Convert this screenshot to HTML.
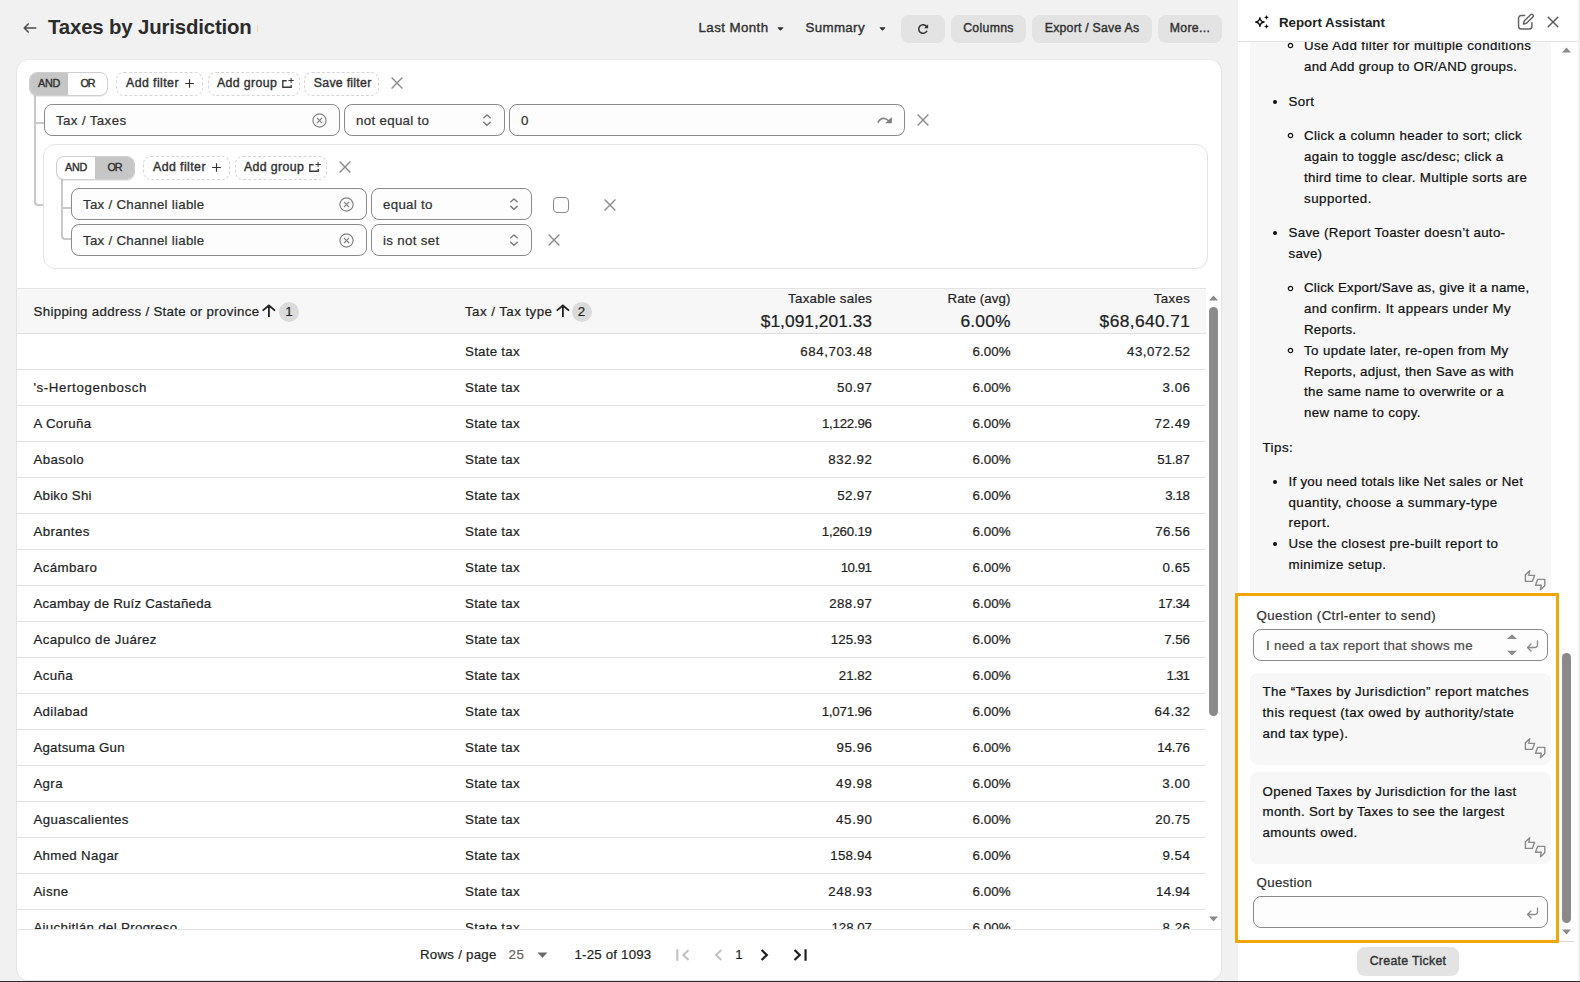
<!DOCTYPE html><html lang="en"><head><meta charset="utf-8"><title>Taxes by Jurisdiction</title>
<style>
*{box-sizing:border-box;margin:0;padding:0}
html,body{width:1580px;height:982px;overflow:hidden}
body{background:#f1f1f1;font-family:"Liberation Sans",sans-serif;font-size:13.3px;line-height:20px;color:#1f1f1f;position:relative}
.a{position:absolute}
span{white-space:nowrap}
svg{display:block;overflow:visible}
body{-webkit-text-stroke:.22px currentColor}
.m{-webkit-text-stroke:.38px currentColor}
/* header */
#title{left:48px;top:13px;font-size:20.4px;line-height:28px;font-weight:700;color:#2b2b2b;-webkit-text-stroke:0}
.hl{font-size:13.3px;line-height:20px;color:#303030;top:17.5px}
.btn{top:15px;height:28px;background:#e3e3e3;border-radius:8px;font-size:12.3px;line-height:26.6px;color:#303030;text-align:center}
/* card */
#card{left:16px;top:59px;width:1206px;height:922px;background:#fff;border:1px solid #e4e4e4;border-top-color:#ebebeb;border-radius:13px;overflow:hidden}
#ci{position:absolute;left:1px;top:1px;width:1204px;height:920px}
#ci>*{position:absolute}
.tog{height:24px;border:1px solid #cfcfcf;border-radius:8px;background:#fff;overflow:hidden;font-size:10.8px;line-height:21.4px;color:#303030;box-shadow:0 1px 0 rgba(0,0,0,.08)}
.tog b{position:absolute;top:0;height:22px;font-weight:400;text-align:center}
.tog b.on{background:#c6c6c6}
.dash{height:24px;border:1px dashed #d6d6d6;border-radius:8px;font-size:12.3px;line-height:22px;color:#303030;background:#fff}
.dash span{position:absolute;top:-1.100px}
.inp{height:32px;border:1px solid #8a8a8a;border-radius:8px;background:#fdfdfd;font-size:13.3px;line-height:30px;color:#303030}
.inp span{position:absolute;left:11px;top:.6px}
.inp svg{position:absolute}
.ln2{background:#c9c9c9}
.tl{border-left:2px solid #c9c9c9;border-bottom:2px solid #c9c9c9;border-bottom-left-radius:4px}
/* table */
#thead{left:-1px;top:227px;width:1189px;height:46px;background:#f7f7f7;border-top:1px solid #e3e3e3;border-bottom:1px solid #e0e0e0}
#thead>*{position:absolute}
.th{font-size:13.3px;line-height:20px;color:#1f1f1f}
.tot{font-size:17.4px;line-height:24px;color:#202223}
.badge{width:20px;height:20px;border-radius:10px;background:#dbdbdb;text-align:center;font-size:13.3px;line-height:20px}
#tbody{left:-1px;top:273px;width:1189px;height:596px;overflow:hidden}
.tr{position:relative;height:36px;border-bottom:1px solid #e3e3e3;line-height:35px}
.tr>div{position:absolute;top:0;height:35px}
.c1{left:16.400px}.c2{left:448px}
.c3{right:334px}.c4{right:195.5px}.c5{right:16px}
#tfoot{left:0;top:868px;width:1203px;height:52px;border-top:1px solid #e3e3e3;background:#fff}
#tfoot>*{position:absolute}
/* panel */
#panel{left:1238px;top:0;width:340px;height:981px;background:#fff;overflow:hidden}
#panel>*{position:absolute}
.bub{background:#f7f7f7;border-radius:8px}
.ln{position:absolute;line-height:20px;height:20px;font-size:13.3px;color:#0f0f0f}
.disc{position:absolute;width:4.2px;height:4.2px;border-radius:50%;background:#0f0f0f}
.circ{position:absolute;width:5.4px;height:5.4px;border-radius:50%;border:1.1px solid #303030}
</style></head>
<body>
<!-- top bar -->
<svg class="a" style="left:20px;top:18px" width="20" height="20" viewBox="0 0 20 20"><path fill="#4a4a4a" d="M16.5 10a.75.75 0 0 1-.75.75h-9.69l2.72 2.72a.75.75 0 0 1-1.06 1.06l-4-4a.75.75 0 0 1 0-1.06l4-4a.75.75 0 1 1 1.06 1.06l-2.72 2.72h9.69a.75.75 0 0 1 .75.75Z"></path></svg>
<div id="title" class="a"><span style="letter-spacing: -0.16px;">Taxes by Jurisdiction</span></div>
<i class="a" style="left:257px;top:24.500px;width:1px;height:7px;background:#f5d9ae"></i>
<div class="a hl m" style="left:698.5px"><span style="letter-spacing: 0.42px;">Last Month</span></div>
<svg class="a" style="left:776.600px;top:25.500px" width="7" height="5.250" viewBox="0 0 8 6"><path fill="#303030" d="M1.3 1.4h5.4c.5 0 .7.5.4.9L4.5 5c-.3.3-.7.3-1 0L.9 2.3c-.3-.4-.1-.9.4-.9Z"></path></svg>
<div class="a hl m" style="left:805.5px"><span style="letter-spacing: 0.36px;">Summary</span></div>
<svg class="a" style="left:878.500px;top:25.500px" width="7" height="5.250" viewBox="0 0 8 6"><path fill="#303030" d="M1.3 1.4h5.4c.5 0 .7.5.4.9L4.5 5c-.3.3-.7.3-1 0L.9 2.3c-.3-.4-.1-.9.4-.9Z"></path></svg>
<div class="a btn" style="left:901px;width:44px"><svg style="position:absolute;left:16px;top:7.700px" width="12" height="12" viewBox="0 0 12 12"><path fill="none" stroke="#303030" stroke-width="1.500" d="M9.500 3.500A4.300 4.300 0 1 0 10 7.700"></path><path fill="#303030" d="M11.100 1.200v4H7.100z"></path></svg></div>
<div class="a btn m" style="left:951px;width:75px"><span style="letter-spacing: 0.3px;">Columns</span></div>
<div class="a btn m" style="left:1032px;width:120px"><span style="letter-spacing: 0.23px;">Export / Save As</span></div>
<div class="a btn m" style="left:1158px;width:64px"><span style="letter-spacing: 0.33px;">More...</span></div>

<!-- main card -->
<div id="card" class="a"><div id="ci">
  <!-- tree lines level 1 -->
  <i class="tl" style="left:16.200px;top:34px;width:9.300px;height:110.600px"></i>
  <i class="ln2" style="left:18px;top:61.200px;width:8px;height:2px"></i>
  <!-- level 1 toolbar -->
  <div class="tog m" style="left:11px;top:11px;width:79px"><b class="on" style="left:0;width:38px"><span style="letter-spacing: -0.27px;">AND</span></b><b style="left:38px;width:39px"><span style="letter-spacing: -1.1px;">OR</span></b></div>
  <div class="dash m" style="left:98px;top:11px;width:87px"><span style="left: 9px; letter-spacing: 0.44px;">Add filter</span><svg style="position:absolute;left:68.3px;top:6.1px" width="9" height="9" viewBox="0 0 9 9"><path stroke="#303030" stroke-width="1.15" d="M4.500.15v8.700M.15 4.500h8.700"></path></svg></div>
  <div class="dash m" style="left:189.5px;top:11px;width:92.5px"><span style="left: 8.5px; letter-spacing: 0.38px;">Add group</span><svg style="position:absolute;left:72.5px;top:4px" width="13" height="11" viewBox="0 0 13 11"><path fill="none" stroke="#3a3a3a" stroke-width="1.400" d="M5.700 3.800H1.800v6.400h8.400V8.100"></path><path stroke="#3a3a3a" stroke-width="1.100" d="M10.100 1.050v4.900M7.400 3.500h5.400"></path></svg></div>
  <div class="dash m" style="left:285.8px;top:11px;width:75px"><span style="left: 9px; letter-spacing: 0.28px;">Save filter</span></div>
  <svg style="left:372.7px;top:16.4px" width="12" height="12" viewBox="0 0 12 12"><path stroke="#8a8a8a" stroke-width="1.350" d="M.6.6l10.8 10.8M11.4.6L.6 11.4"></path></svg>
  <!-- row 1 -->
  <div class="inp" style="left:26px;top:43px;width:296px"><span style="letter-spacing: 0.38px;">Tax / Taxes</span><svg style="left:266.9px;top:8.1px" width="15" height="15" viewBox="0 0 15 15"><circle cx="7.5" cy="7.5" r="6.6" fill="none" stroke="#808080" stroke-width="1.15"></circle><path stroke="#808080" stroke-width="1.25" d="M4.9 4.9l5.2 5.2M10.1 4.9L4.9 10.1"></path></svg></div>
  <div class="inp" style="left:326px;top:43px;width:161px"><span style="letter-spacing: 0.32px;">not equal to</span><svg style="left:137px;top:7px" width="10" height="16" viewBox="0 0 10 16"><path fill="none" stroke="#808080" stroke-width="1.45" d="M1.3 6.300L5 2.900l3.700 3.400M1.300 9.900L5 13.300l3.700-3.400"></path></svg></div>
  <div class="inp" style="left:491px;top:43px;width:396px"><span style="letter-spacing: 1px;">0</span><svg style="left:367px;top:10px" width="16" height="12" viewBox="0 0 16 12"><path fill="none" stroke="#808080" stroke-width="1.500" d="M.9 7.900C2.300 4.600 5 3 7.600 3.500c1.500.300 2.900 1.100 4.100 2.300"></path><path fill="#808080" d="M14.800 2.100v6.200H8.200z"></path></svg></div>
  <svg style="left:899px;top:53.4px" width="12" height="12" viewBox="0 0 12 12"><path stroke="#8a8a8a" stroke-width="1.350" d="M.6.6l10.8 10.8M11.4.6L.6 11.4"></path></svg>
  <!-- nested group -->
  <div style="left:25px;top:82.5px;width:1165px;height:125.500px;border:1px solid #e3e3e3;border-radius:12px"></div>
  <i class="tl" style="left:43.200px;top:118px;width:9.800px;height:60.700px"></i>
  <i class="ln2" style="left:45px;top:145.900px;width:8px;height:2px"></i>
  <div class="tog m" style="left:38px;top:95px;width:79px"><b style="left:0;width:38px"><span style="letter-spacing: -0.27px;">AND</span></b><b class="on" style="left:38px;width:39px"><span style="letter-spacing: -1.1px;">OR</span></b></div>
  <div class="dash m" style="left:125px;top:95px;width:87px"><span style="left: 9px; letter-spacing: 0.44px;">Add filter</span><svg style="position:absolute;left:68.3px;top:6.1px" width="9" height="9" viewBox="0 0 9 9"><path stroke="#303030" stroke-width="1.15" d="M4.500.15v8.700M.15 4.500h8.700"></path></svg></div>
  <div class="dash m" style="left:216.500px;top:95px;width:92.5px"><span style="left: 8.5px; letter-spacing: 0.38px;">Add group</span><svg style="position:absolute;left:72.5px;top:4px" width="13" height="11" viewBox="0 0 13 11"><path fill="none" stroke="#3a3a3a" stroke-width="1.400" d="M5.700 3.800H1.800v6.400h8.400V8.100"></path><path stroke="#3a3a3a" stroke-width="1.100" d="M10.100 1.050v4.900M7.400 3.500h5.400"></path></svg></div>
  <svg style="left:321.2px;top:100.3px" width="12" height="12" viewBox="0 0 12 12"><path stroke="#8a8a8a" stroke-width="1.350" d="M.6.6l10.8 10.8M11.4.6L.6 11.4"></path></svg>
  <div class="inp" style="left:53px;top:127px;width:296px"><span style="letter-spacing: 0.27px;">Tax / Channel liable</span><svg style="left:266.9px;top:8.1px" width="15" height="15" viewBox="0 0 15 15"><circle cx="7.5" cy="7.5" r="6.6" fill="none" stroke="#808080" stroke-width="1.15"></circle><path stroke="#808080" stroke-width="1.25" d="M4.9 4.9l5.2 5.2M10.1 4.9L4.9 10.1"></path></svg></div>
  <div class="inp" style="left:353px;top:127px;width:161px"><span style="letter-spacing: 0.3px;">equal to</span><svg style="left:137px;top:7px" width="10" height="16" viewBox="0 0 10 16"><path fill="none" stroke="#808080" stroke-width="1.45" d="M1.3 6.300L5 2.900l3.700 3.400M1.300 9.900L5 13.300l3.700-3.400"></path></svg></div>
  <i style="left:535px;top:136px;width:16px;height:16px;border:1px solid #8a8a8a;border-radius:4px;background:#fdfdfd"></i>
  <svg style="left:585.6px;top:137.6px" width="12" height="12" viewBox="0 0 12 12"><path stroke="#8a8a8a" stroke-width="1.350" d="M.6.6l10.8 10.8M11.4.6L.6 11.4"></path></svg>
  <div class="inp" style="left:53px;top:163px;width:296px"><span style="letter-spacing: 0.27px;">Tax / Channel liable</span><svg style="left:266.9px;top:8.1px" width="15" height="15" viewBox="0 0 15 15"><circle cx="7.5" cy="7.5" r="6.6" fill="none" stroke="#808080" stroke-width="1.15"></circle><path stroke="#808080" stroke-width="1.25" d="M4.9 4.9l5.2 5.2M10.1 4.9L4.9 10.1"></path></svg></div>
  <div class="inp" style="left:353px;top:163px;width:161px"><span style="letter-spacing: 0.32px;">is not set</span><svg style="left:137px;top:7px" width="10" height="16" viewBox="0 0 10 16"><path fill="none" stroke="#808080" stroke-width="1.45" d="M1.3 6.300L5 2.900l3.700 3.400M1.300 9.900L5 13.300l3.700-3.400"></path></svg></div>
  <svg style="left:530px;top:173.4px" width="12" height="12" viewBox="0 0 12 12"><path stroke="#8a8a8a" stroke-width="1.350" d="M.6.6l10.8 10.8M11.4.6L.6 11.4"></path></svg>

  <!-- table header -->
  <div id="thead">
    <div class="th" style="left:16.5px;top:13px"><span style="letter-spacing: 0.32px;">Shipping address / State or province</span></div>
    <svg style="left:245px;top:14px" width="14" height="14" viewBox="0 0 14 14"><path fill="none" stroke="#1f1f1f" stroke-width="1.800" d="M.7 7.600L6.900 2.500l6.200 5.100M6.900 2.400V13.900"></path></svg>
    <div class="badge" style="left:262px;top:13px"><span>1</span></div>
    <div class="th" style="left:448px;top:13px"><span style="letter-spacing: 0.45px;">Tax / Tax type</span></div>
    <svg style="left:538.7px;top:14px" width="14" height="14" viewBox="0 0 14 14"><path fill="none" stroke="#1f1f1f" stroke-width="1.800" d="M.7 7.600L6.900 2.500l6.200 5.100M6.900 2.400V13.900"></path></svg>
    <div class="badge" style="left:554.5px;top:13px"><span>2</span></div>
    <div class="th" style="right:334px;top:-0.5px"><span class="r" style="letter-spacing: 0.28px; margin-right: -0.28px;">Taxable sales</span></div>
    <div class="tot" style="right:334px;top:20px"><span class="r">$1,091,201.33</span></div>
    <div class="th" style="right:195.500px;top:-0.5px"><span class="r" style="letter-spacing: 0.11px; margin-right: -0.11px;">Rate (avg)</span></div>
    <div class="tot" style="right:195.500px;top:20px"><span class="r" style="letter-spacing: 0.18px; margin-right: -0.18px;">6.00%</span></div>
    <div class="th" style="right:16px;top:-0.5px"><span class="r" style="letter-spacing: 0.36px; margin-right: -0.36px;">Taxes</span></div>
    <div class="tot" style="right:16px;top:20px"><span class="r" style="letter-spacing: 0.37px; margin-right: -0.37px;">$68,640.71</span></div>
  </div>
  <div id="tbody">
<div class="tr"><div class="c1"></div><div class="c2"><span style="letter-spacing: 0.26px;">State tax</span></div><div class="c3"><span class="r" style="letter-spacing: 0.57px; margin-right: -0.57px;">684,703.48</span></div><div class="c4"><span class="r" style="letter-spacing: 0.06px; margin-right: -0.06px;">6.00%</span></div><div class="c5"><span class="r" style="letter-spacing: 0.47px; margin-right: -0.47px;">43,072.52</span></div></div>
<div class="tr"><div class="c1"><span style="letter-spacing: 0.61px;">'s-Hertogenbosch</span></div><div class="c2"><span style="letter-spacing: 0.26px;">State tax</span></div><div class="c3"><span class="r" style="letter-spacing: 0.4px; margin-right: -0.4px;">50.97</span></div><div class="c4"><span class="r" style="letter-spacing: 0.06px; margin-right: -0.06px;">6.00%</span></div><div class="c5"><span class="r" style="letter-spacing: 0.54px; margin-right: -0.54px;">3.06</span></div></div>
<div class="tr"><div class="c1"><span style="letter-spacing: 0.33px;">A Coruña</span></div><div class="c2"><span style="letter-spacing: 0.26px;">State tax</span></div><div class="c3"><span class="r" style="letter-spacing: -0.24px; margin-right: 0.24px;">1,122.96</span></div><div class="c4"><span class="r" style="letter-spacing: 0.06px; margin-right: -0.06px;">6.00%</span></div><div class="c5"><span class="r" style="letter-spacing: 0.57px; margin-right: -0.57px;">72.49</span></div></div>
<div class="tr"><div class="c1"><span style="letter-spacing: 0.38px;">Abasolo</span></div><div class="c2"><span style="letter-spacing: 0.26px;">State tax</span></div><div class="c3"><span class="r" style="letter-spacing: 0.62px; margin-right: -0.62px;">832.92</span></div><div class="c4"><span class="r" style="letter-spacing: 0.06px; margin-right: -0.06px;">6.00%</span></div><div class="c5"><span class="r" style="letter-spacing: -0.12px; margin-right: 0.12px;">51.87</span></div></div>
<div class="tr"><div class="c1"><span style="letter-spacing: 0.24px;">Abiko Shi</span></div><div class="c2"><span style="letter-spacing: 0.26px;">State tax</span></div><div class="c3"><span class="r" style="letter-spacing: 0.39px; margin-right: -0.39px;">52.97</span></div><div class="c4"><span class="r" style="letter-spacing: 0.06px; margin-right: -0.06px;">6.00%</span></div><div class="c5"><span class="r" style="letter-spacing: -0.41px; margin-right: 0.41px;">3.18</span></div></div>
<div class="tr"><div class="c1"><span style="letter-spacing: 0.39px;">Abrantes</span></div><div class="c2"><span style="letter-spacing: 0.26px;">State tax</span></div><div class="c3"><span class="r" style="letter-spacing: -0.22px; margin-right: 0.22px;">1,260.19</span></div><div class="c4"><span class="r" style="letter-spacing: 0.06px; margin-right: -0.06px;">6.00%</span></div><div class="c5"><span class="r" style="letter-spacing: 0.35px; margin-right: -0.35px;">76.56</span></div></div>
<div class="tr"><div class="c1"><span style="letter-spacing: 0.41px;">Acámbaro</span></div><div class="c2"><span style="letter-spacing: 0.26px;">State tax</span></div><div class="c3"><span class="r" style="letter-spacing: -0.48px; margin-right: 0.48px;">10.91</span></div><div class="c4"><span class="r" style="letter-spacing: 0.06px; margin-right: -0.06px;">6.00%</span></div><div class="c5"><span class="r" style="letter-spacing: 0.5px; margin-right: -0.5px;">0.65</span></div></div>
<div class="tr"><div class="c1"><span style="letter-spacing: 0.2px;">Acambay de Ruíz Castañeda</span></div><div class="c2"><span style="letter-spacing: 0.26px;">State tax</span></div><div class="c3"><span class="r" style="letter-spacing: 0.43px; margin-right: -0.43px;">288.97</span></div><div class="c4"><span class="r" style="letter-spacing: 0.06px; margin-right: -0.06px;">6.00%</span></div><div class="c5"><span class="r" style="letter-spacing: -0.36px; margin-right: 0.36px;">17.34</span></div></div>
<div class="tr"><div class="c1"><span style="letter-spacing: 0.37px;">Acapulco de Juárez</span></div><div class="c2"><span style="letter-spacing: 0.26px;">State tax</span></div><div class="c3"><span class="r" style="letter-spacing: 0.1px; margin-right: -0.1px;">125.93</span></div><div class="c4"><span class="r" style="letter-spacing: 0.06px; margin-right: -0.06px;">6.00%</span></div><div class="c5"><span class="r" style="letter-spacing: -0.02px; margin-right: 0.02px;">7.56</span></div></div>
<div class="tr"><div class="c1"><span style="letter-spacing: 0.39px;">Acuña</span></div><div class="c2"><span style="letter-spacing: 0.26px;">State tax</span></div><div class="c3"><span class="r" style="letter-spacing: -0.01px; margin-right: 0.01px;">21.82</span></div><div class="c4"><span class="r" style="letter-spacing: 0.06px; margin-right: -0.06px;">6.00%</span></div><div class="c5"><span class="r" style="letter-spacing: -0.83px; margin-right: 0.83px;">1.31</span></div></div>
<div class="tr"><div class="c1"><span style="letter-spacing: 0.36px;">Adilabad</span></div><div class="c2"><span style="letter-spacing: 0.26px;">State tax</span></div><div class="c3"><span class="r" style="letter-spacing: -0.2px; margin-right: 0.2px;">1,071.96</span></div><div class="c4"><span class="r" style="letter-spacing: 0.06px; margin-right: -0.06px;">6.00%</span></div><div class="c5"><span class="r" style="letter-spacing: 0.56px; margin-right: -0.56px;">64.32</span></div></div>
<div class="tr"><div class="c1"><span style="letter-spacing: 0.23px;">Agatsuma Gun</span></div><div class="c2"><span style="letter-spacing: 0.26px;">State tax</span></div><div class="c3"><span class="r" style="letter-spacing: 0.57px; margin-right: -0.57px;">95.96</span></div><div class="c4"><span class="r" style="letter-spacing: 0.06px; margin-right: -0.06px;">6.00%</span></div><div class="c5"><span class="r" style="letter-spacing: -0.13px; margin-right: 0.13px;">14.76</span></div></div>
<div class="tr"><div class="c1"><span style="letter-spacing: 0.36px;">Agra</span></div><div class="c2"><span style="letter-spacing: 0.26px;">State tax</span></div><div class="c3"><span class="r" style="letter-spacing: 0.66px; margin-right: -0.66px;">49.98</span></div><div class="c4"><span class="r" style="letter-spacing: 0.06px; margin-right: -0.06px;">6.00%</span></div><div class="c5"><span class="r" style="letter-spacing: 0.59px; margin-right: -0.59px;">3.00</span></div></div>
<div class="tr"><div class="c1"><span style="letter-spacing: 0.37px;">Aguascalientes</span></div><div class="c2"><span style="letter-spacing: 0.26px;">State tax</span></div><div class="c3"><span class="r" style="letter-spacing: 0.68px; margin-right: -0.68px;">45.90</span></div><div class="c4"><span class="r" style="letter-spacing: 0.06px; margin-right: -0.06px;">6.00%</span></div><div class="c5"><span class="r" style="letter-spacing: 0.37px; margin-right: -0.37px;">20.75</span></div></div>
<div class="tr"><div class="c1"><span style="letter-spacing: 0.31px;">Ahmed Nagar</span></div><div class="c2"><span style="letter-spacing: 0.26px;">State tax</span></div><div class="c3"><span class="r" style="letter-spacing: 0.2px; margin-right: -0.2px;">158.94</span></div><div class="c4"><span class="r" style="letter-spacing: 0.06px; margin-right: -0.06px;">6.00%</span></div><div class="c5"><span class="r" style="letter-spacing: 0.58px; margin-right: -0.58px;">9.54</span></div></div>
<div class="tr"><div class="c1"><span style="letter-spacing: 0.35px;">Aisne</span></div><div class="c2"><span style="letter-spacing: 0.26px;">State tax</span></div><div class="c3"><span class="r" style="letter-spacing: 0.62px; margin-right: -0.62px;">248.93</span></div><div class="c4"><span class="r" style="letter-spacing: 0.06px; margin-right: -0.06px;">6.00%</span></div><div class="c5"><span class="r" style="letter-spacing: 0.15px; margin-right: -0.15px;">14.94</span></div></div>
<div class="tr"><div class="c1"><span style="letter-spacing: 0.32px;">Ajuchitlán del Progreso</span></div><div class="c2"><span style="letter-spacing: 0.26px;">State tax</span></div><div class="c3"><span class="r" style="letter-spacing: -0.03px; margin-right: 0.03px;">128.07</span></div><div class="c4"><span class="r" style="letter-spacing: 0.06px; margin-right: -0.06px;">6.00%</span></div><div class="c5"><span class="r" style="letter-spacing: 0.54px; margin-right: -0.54px;">8.26</span></div></div>
  </div>
  <!-- table scrollbar -->
  <svg style="left:1191px;top:234px" width="9" height="6" viewBox="0 0 9 6"><path fill="#8a8a8a" d="M0 5.500L4.500.5 9 5.500z"></path></svg>
  <i style="left:1191px;top:246px;width:9px;height:409px;border-radius:4.500px;background:#8a8a8a"></i>
  <svg style="left:1191px;top:855.200px" width="9" height="6" viewBox="0 0 9 6"><path fill="#8a8a8a" d="M0 .5L4.500 5.500 9 .5z"></path></svg>
  <!-- footer -->
  <div id="tfoot">
    <div class="th" style="left:402px;top:14.500px"><span style="letter-spacing: 0.25px;">Rows / page</span></div>
    <div class="th" style="left:490.500px;top:14.500px;color:#616161"><span style="letter-spacing: 0.63px;">25</span></div>
    <svg style="left:518.5px;top:22px" width="11" height="6" viewBox="0 0 11 6"><path fill="#6b6b6b" d="M.5.5h10L5.500 5.800z"></path></svg>
    <div class="th" style="left:556.500px;top:14.500px"><span style="letter-spacing: 0.19px;">1-25 of 1093</span></div>
    <svg style="left:0;top:0" width="10" height="10" viewBox="0 0 10 10"><g fill="none" stroke-width="2.200"><path stroke="#c4c4c4" d="M659.350 19.200V30.800M670.600 20l-5.200 5 5.200 5M703.200 20l-4.940 5 4.940 5"></path><path stroke="#1f1f1f" d="M743.600 20l5.240 5-5.240 5M776.500 20l5.240 5-5.240 5M787.550 19.200V30.800"></path></g></svg>
    <div class="th" style="left:717.300px;top:14.500px"><span>1</span></div>
  </div>
</div></div>

<!-- assistant panel -->
<div id="panel" class="a">
  <div style="left:12px;top:30px;width:301px;height:562px;background:#f7f7f7"></div>
<div class="ln" style="left:66px;top:35.9px"><span style="letter-spacing: 0.42px;">Use Add filter for multiple conditions</span></div>
<div class="ln" style="left:66px;top:56.9px"><span style="letter-spacing: 0.27px;">and Add group to OR/AND groups.</span></div>
<div class="ln" style="left:50.5px;top:92.0px"><span style="letter-spacing: 0.39px;">Sort</span></div>
<div class="ln" style="left:66px;top:126.0px"><span style="letter-spacing: 0.35px;">Click a column header to sort; click</span></div>
<div class="ln" style="left:66px;top:146.9px"><span style="letter-spacing: 0.36px;">again to toggle asc/desc; click a</span></div>
<div class="ln" style="left:66px;top:167.7px"><span style="letter-spacing: 0.34px;">third time to clear. Multiple sorts are</span></div>
<div class="ln" style="left:66px;top:188.6px"><span style="letter-spacing: 0.51px;">supported.</span></div>
<div class="ln" style="left:50.5px;top:223.4px"><span style="letter-spacing: 0.32px;">Save (Report Toaster doesn’t auto-</span></div>
<div class="ln" style="left:50.5px;top:244.2px"><span style="letter-spacing: 0.23px;">save)</span></div>
<div class="ln" style="left:66px;top:278.4px"><span style="letter-spacing: 0.24px;">Click Export/Save as, give it a name,</span></div>
<div class="ln" style="left:66px;top:299.2px"><span style="letter-spacing: 0.37px;">and confirm. It appears under My</span></div>
<div class="ln" style="left:66px;top:320.0px"><span style="letter-spacing: 0.25px;">Reports.</span></div>
<div class="ln" style="left:66px;top:340.8px"><span style="letter-spacing: 0.39px;">To update later, re-open from My</span></div>
<div class="ln" style="left:66px;top:361.6px"><span style="letter-spacing: 0.24px;">Reports, adjust, then Save as with</span></div>
<div class="ln" style="left:66px;top:382.4px"><span style="letter-spacing: 0.3px;">the same name to overwrite or a</span></div>
<div class="ln" style="left:66px;top:403.2px"><span style="letter-spacing: 0.37px;">new name to copy.</span></div>
<div class="ln" style="left:24.5px;top:437.6px"><span style="letter-spacing: 0.48px;">Tips:</span></div>
<div class="ln" style="left:50.5px;top:471.8px"><span style="letter-spacing: 0.27px;">If you need totals like Net sales or Net</span></div>
<div class="ln" style="left:50.5px;top:492.6px"><span style="letter-spacing: 0.46px;">quantity, choose a summary-type</span></div>
<div class="ln" style="left:50.5px;top:513.4px"><span style="letter-spacing: 0.5px;">report.</span></div>
<div class="ln" style="left:50.5px;top:534.2px"><span style="letter-spacing: 0.4px;">Use the closest pre-built report to</span></div>
<div class="ln" style="left:50.5px;top:555.0px"><span style="letter-spacing: 0.36px;">minimize setup.</span></div>
<i class="disc" style="left:35.2px;top:99.7px"></i>
<i class="disc" style="left:35.2px;top:231.1px"></i>
<i class="disc" style="left:35.2px;top:479.5px"></i>
<i class="disc" style="left:35.2px;top:541.9px"></i>
<svg style="left:49.2px;top:42.2px" width="7" height="7" viewBox="0 0 7 7"><circle cx="3.5" cy="3.5" r="2.2" fill="none" stroke="#111" stroke-width="1.2"></circle></svg>
<svg style="left:49.2px;top:132.3px" width="7" height="7" viewBox="0 0 7 7"><circle cx="3.5" cy="3.5" r="2.2" fill="none" stroke="#111" stroke-width="1.2"></circle></svg>
<svg style="left:49.2px;top:284.7px" width="7" height="7" viewBox="0 0 7 7"><circle cx="3.5" cy="3.5" r="2.2" fill="none" stroke="#111" stroke-width="1.2"></circle></svg>
<svg style="left:49.2px;top:347.1px" width="7" height="7" viewBox="0 0 7 7"><circle cx="3.5" cy="3.5" r="2.2" fill="none" stroke="#111" stroke-width="1.2"></circle></svg>
  <svg style="left:286px;top:569px" width="22" height="22" viewBox="0 0 22 22"><g fill="none" stroke="#8a8a8a" stroke-width="1.400" stroke-linejoin="round"><path d="M1.400 5.800L5.700 1.700 4.800 6.400h5.800L8.300 12.400H1.400z"></path><path d="M13.600 10.400h7.200v6.400L16.500 20.800l.8-4.600H11.500z"></path></g></svg>
  <!-- header -->
  <div style="left:0;top:0;width:340px;height:42px;background:#fff;border-bottom:1px solid #e3e3e3"></div>
  <svg style="left:16px;top:15px" width="16" height="14" viewBox="0 0 16 14"><path fill="none" stroke="#111" stroke-width="1.300" stroke-linejoin="round" d="M5.900 2.600Q6.350 6.500 10.100 7 6.350 7.500 5.900 11.400 5.450 7.500 1.700 7 5.450 6.500 5.900 2.600Z"></path><path fill="#111" d="M12.500-.3c.2 1.700 1 2.400 2.700 2.700-1.700.3-2.500 1-2.700 2.700-.2-1.700-1-2.400-2.700-2.700 1.700-.3 2.500-1 2.700-2.700ZM12.500 8.800c.2 1.700 1 2.400 2.700 2.700-1.700.3-2.500 1-2.700 2.700-.2-1.700-1-2.400-2.700-2.700 1.700-.3 2.500-1 2.700-2.700Z"></path></svg>
  <div style="left:41px;top:13px;font-weight:700;font-size:13.3px;line-height:20px;color:#202223;-webkit-text-stroke:0"><span>Report Assistant</span></div>
  <svg style="left:278.700px;top:12.600px" width="17.500" height="17.500" viewBox="0 0 17 17"><g fill="none" stroke="#616161" stroke-width="1.400" stroke-linecap="round" stroke-linejoin="round"><path d="M7.500 2.500H4.200c-1.500 0-2.700 1.200-2.700 2.700v7.600c0 1.500 1.200 2.700 2.700 2.700h7.600c1.500 0 2.700-1.200 2.700-2.700V9.500"></path><path d="M13.200 1.600c.6-.6 1.600-.6 2.200 0s.6 1.600 0 2.200L9.200 10l-2.900.7.700-2.900z"></path></g></svg>
  <svg style="left:308.500px;top:15.500px" width="12" height="12" viewBox="0 0 12 12"><path stroke="#575757" stroke-width="1.400" stroke-linecap="round" d="M1.200 1.200l9.600 9.600M10.800 1.200L1.200 10.800"></path></svg>
  <!-- footer line + button -->
  <i style="left:0;top:941px;width:336px;height:1px;background:#d9d9d9"></i>
  <div class="m" style="left:119px;top:947px;width:102px;height:29px;background:#e3e3e3;border-radius:8px;text-align:center;font-size:12.3px;line-height:28px;color:#303030"><span style="letter-spacing: 0.33px;">Create Ticket</span></div>
  <!-- highlighted box content -->
  <div style="left:0;top:596px;width:318px;height:343px;background:#fff"></div>
  <div class="ln" style="left:18.500px;top:605.800px;color:#303030"><span style="letter-spacing: 0.38px;">Question (Ctrl-enter to send)</span></div>
  <div class="inp" style="left:15px;top:629px;width:295px;color:#4a4a4a"><span style="left: 12px; top: 1.3px; letter-spacing: 0.29px;">I need a tax report that shows me</span>
    <svg style="left:252.500px;top:4px" width="10" height="22" viewBox="0 0 10 22"><path fill="#8a8a8a" d="M0 5L5 .3 10 5zM0 16.800l5 4.700 5-4.700z"></path></svg>
    <svg style="left:272px;top:10.400px" width="13" height="12" viewBox="0 0 13 12"><path fill="none" stroke="#8a8a8a" stroke-width="1.300" stroke-linecap="round" stroke-linejoin="round" d="M11.500 1v3.500c0 2-1.200 3-3 3H1.500M5 4L1.500 7.500 5 11"></path></svg></div>
  <div class="bub" style="left:12px;top:673px;width:301px;height:92px"></div>
  <div class="bub" style="left:12px;top:772px;width:301px;height:92px"></div>
<div class="ln" style="left:24.5px;top:681.9px"><span style="letter-spacing: 0.38px;">The “Taxes by Jurisdiction” report matches</span></div>
<div class="ln" style="left:24.5px;top:702.7px"><span style="letter-spacing: 0.41px;">this request (tax owed by authority/state</span></div>
<div class="ln" style="left:24.5px;top:723.5px"><span style="letter-spacing: 0.37px;">and tax type).</span></div>
<div class="ln" style="left:24.5px;top:781.5px"><span style="letter-spacing: 0.36px;">Opened Taxes by Jurisdiction for the last</span></div>
<div class="ln" style="left:24.5px;top:802.3px"><span style="letter-spacing: 0.3px;">month. Sort by Taxes to see the largest</span></div>
<div class="ln" style="left:24.5px;top:823.1px"><span style="letter-spacing: 0.37px;">amounts owed.</span></div>
  <svg style="left:286px;top:737px" width="22" height="22" viewBox="0 0 22 22"><g fill="none" stroke="#8a8a8a" stroke-width="1.400" stroke-linejoin="round"><path d="M1.400 5.800L5.700 1.700 4.800 6.400h5.800L8.300 12.400H1.400z"></path><path d="M13.600 10.400h7.200v6.400L16.500 20.800l.8-4.600H11.500z"></path></g></svg>
  <svg style="left:286px;top:836px" width="22" height="22" viewBox="0 0 22 22"><g fill="none" stroke="#8a8a8a" stroke-width="1.400" stroke-linejoin="round"><path d="M1.400 5.800L5.700 1.700 4.800 6.400h5.800L8.300 12.400H1.400z"></path><path d="M13.600 10.400h7.200v6.400L16.500 20.800l.8-4.600H11.500z"></path></g></svg>
  <div class="ln" style="left:18.500px;top:873.200px;color:#303030"><span style="letter-spacing: 0.32px;">Question</span></div>
  <div class="inp" style="left:15px;top:896px;width:295px"><svg style="left:272px;top:10.400px" width="13" height="12" viewBox="0 0 13 12"><path fill="none" stroke="#8a8a8a" stroke-width="1.300" stroke-linecap="round" stroke-linejoin="round" d="M11.500 1v3.500c0 2-1.200 3-3 3H1.500M5 4L1.500 7.500 5 11"></path></svg></div>
  <!-- panel scrollbar -->
  <svg style="left:324px;top:46.700px" width="9" height="6" viewBox="0 0 9 6"><path fill="#8a8a8a" d="M0 5.500L4.500.5 9 5.500z"></path></svg>
  <i style="left:324px;top:653px;width:9px;height:270px;border-radius:4.500px;background:#8a8a8a"></i>
  <svg style="left:324px;top:928.500px" width="9" height="6" viewBox="0 0 9 6"><path fill="#8a8a8a" d="M0 .5L4.500 5.500 9 .5z"></path></svg>
</div>
<!-- orange highlight -->
<div class="a" style="left:1235px;top:593px;width:324px;height:350px;border:3px solid #f5a70a"></div>
<!-- bottom edge -->
<i class="a" style="left:0;top:981px;width:1580px;height:1px;background:#2b2b2b"></i>

</body></html>
